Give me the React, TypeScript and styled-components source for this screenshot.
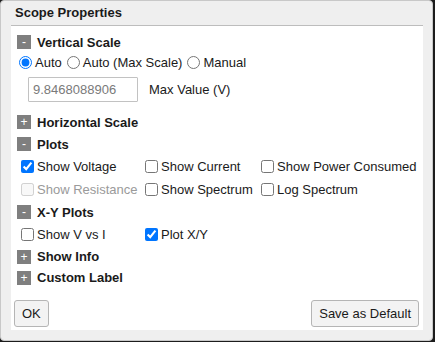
import React from "react";
import styled, { createGlobalStyle } from "styled-components";

const Global = createGlobalStyle`
  html, body { margin: 0; padding: 0; background: #1c1c1c; }
  body { font-family: "Liberation Sans", Arial, sans-serif; font-size: 13px; color: #1a1a1a; }
  * { box-sizing: border-box; }
`;

const Dialog = styled.div`
  width: 433px;
  height: 341px;
  background: #efefef;
  border: 1px solid #c8c8c8;
  border-radius: 4px;
  display: flex;
  flex-direction: column;
`;

const TitleBar = styled.div`
  height: 24px;
  line-height: 24px;
  padding-left: 14px;
  font-weight: bold;
  font-size: 13px;
  color: #1a1a1a;
`;

const Panel = styled.div`
  margin-left: 10px;
  width: 412px;
  height: 305px;
  background: #fff;
  border-top: 1px solid #bdbdbd;
  padding: 5px 4px 3px 6px;
  display: flex;
  flex-direction: column;
`;

const Heading = styled.div<{ $h?: number }>`
  height: ${(p) => p.$h ?? 22}px;
  display: flex;
  align-items: center;
  gap: 6px;
  font-weight: bold;
  font-size: 13px;
`;

const Toggle = styled.span`
  width: 14px;
  height: 14px;
  background: #7f7f7f;
  color: #fff;
  font-size: 12px;
  font-weight: normal;
  line-height: 14px;
  text-align: center;
  display: inline-block;
`;

const RadioRow = styled.div`
  height: 18px;
  display: flex;
  align-items: center;
`;

const RadioLabel = styled.label`
  display: flex;
  align-items: center;
  margin-right: 3px;
  input {
    margin: 0 3px 0 2px;
    width: 13px;
    height: 13px;
  }
`;

const InputRow = styled.div`
  display: flex;
  align-items: center;
  padding: 6px 0 9px 11px;
  gap: 11px;
`;

const ValueBox = styled.input`
  width: 110px;
  height: 25px;
  border: 1px solid #c2c2c2;
  border-radius: 1px;
  padding: 0 4px;
  font-family: "Liberation Sans", Arial, sans-serif;
  font-size: 13px;
  color: #7a7a7a;
  background: #fff;
`;

const CheckGrid = styled.div`
  display: grid;
  grid-template-columns: 124px 116px auto;
`;

const CheckLabel = styled.label<{ $disabled?: boolean }>`
  height: 23px;
  display: flex;
  align-items: center;
  color: ${(p) => (p.$disabled ? "#9a9a9a" : "#1a1a1a")};
  white-space: nowrap;
  input {
    margin: 0 3px 0 4px;
    width: 13px;
    height: 13px;
  }
`;

const ButtonBar = styled.div`
  margin-top: auto;
  margin-left: -3px;
  display: flex;
  justify-content: space-between;
`;

const Button = styled.button`
  height: 27px;
  padding: 0 7px;
  border: 1px solid #b5b5b5;
  border-radius: 3px;
  background: #f3f3f3;
  font-family: "Liberation Sans", Arial, sans-serif;
  font-size: 13px;
  color: #1a1a1a;
`;

const Section: React.FC<{ open: boolean; title: string; h?: number }> = ({ open, title, h }) => (
  <Heading $h={h}>
    <Toggle>{open ? "-" : "+"}</Toggle>
    {title}
  </Heading>
);

const Check: React.FC<{ label: string; checked?: boolean; disabled?: boolean }> = ({ label, checked, disabled }) => (
  <CheckLabel $disabled={disabled}>
    <input type="checkbox" defaultChecked={checked} disabled={disabled} />
    {label}
  </CheckLabel>
);

export default function App() {
  return (
    <>
      <Global />
      <Dialog>
        <TitleBar>Scope Properties</TitleBar>
        <Panel>
          <Section open title="Vertical Scale" />
          <RadioRow>
            <RadioLabel>
              <input type="radio" name="vs" defaultChecked />
              Auto
            </RadioLabel>
            <RadioLabel>
              <input type="radio" name="vs" />
              Auto (Max Scale)
            </RadioLabel>
            <RadioLabel>
              <input type="radio" name="vs" />
              Manual
            </RadioLabel>
          </RadioRow>
          <InputRow>
            <ValueBox defaultValue="9.8468088906" disabled />
            <span>Max Value (V)</span>
          </InputRow>
          <Section open={false} title="Horizontal Scale" />
          <Section open title="Plots" />
          <CheckGrid>
            <Check label="Show Voltage" checked />
            <Check label="Show Current" />
            <Check label="Show Power Consumed" />
            <Check label="Show Resistance" disabled />
            <Check label="Show Spectrum" />
            <Check label="Log Spectrum" />
          </CheckGrid>
          <Section open title="X-Y Plots" />
          <CheckGrid>
            <Check label="Show V vs I" />
            <Check label="Plot X/Y" checked />
          </CheckGrid>
          <Section open={false} title="Show Info" h={21} />
          <Section open={false} title="Custom Label" h={21} />
          <ButtonBar>
            <Button>OK</Button>
            <Button>Save as Default</Button>
          </ButtonBar>
        </Panel>
      </Dialog>
    </>
  );
}
